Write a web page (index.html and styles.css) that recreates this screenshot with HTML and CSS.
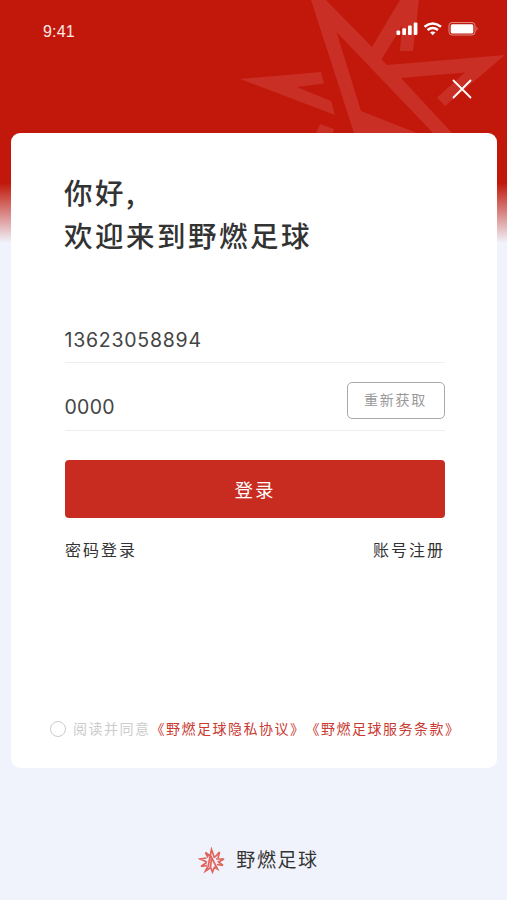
FILE: index.html
```html
<!DOCTYPE html>
<html lang="zh-CN">
<head>
    <meta charset="UTF-8">
    <meta name="viewport" content="width=device-width, initial-scale=1.0">
    <title>野燃足球</title>
    <link rel="stylesheet" href="styles.css">
</head>
<body>
    <svg class="watermark" viewBox="0 0 507 133">
        <path d="M240 79 L321 72 L324 83.5 L297 87 L331 101 L335 115 Z"/>
        <path fill-rule="evenodd" d="M311 0 H326 L372 47 L400 0 H419 L413 51 H400 L402 26 L381.500 59.500 L387 65 L505 55 L445 106 L437 97.500 L465 72.500 L401 78 L452 133 H433 L336.500 32 L361 111 L417 133 H354 Z"/>
        <path d="M320 124 L334 129 L333 133 H316 Z"/>
    </svg>

    <header class="status-bar">
        <span class="time">9:41</span>
        <svg class="status-icons" width="84" height="16" viewBox="0 0 84 16">
            <rect x="1.500" y="8.500" width="3.700" height="4.500" rx="1"/>
            <rect x="7.300" y="6.200" width="3.700" height="6.800" rx="1"/>
            <rect x="13" y="3.500" width="3.700" height="9.500" rx="1"/>
            <rect x="18.700" y="0.500" width="3.700" height="12.500" rx="1"/>
            <g class="wifi">
                <path d="M29.500 4.800 Q37.700 -1.800 46 4.800"/>
                <path d="M32.500 8 Q37.700 4 43 8"/>
            </g>
            <path d="M35 10.300 Q37.700 8.500 40.500 10.300 L37.700 13.200 Z"/>
            <rect class="battery" x="54" y="0.500" width="26" height="12.500" rx="3"/>
            <rect x="55.700" y="2.200" width="22.600" height="9.200" rx="1.500"/>
            <path class="battery-cap" d="M81.500 4.500 Q83.500 6.700 81.500 9 Z"/>
        </svg>
    </header>

    <div class="close-row">
        <svg class="close" width="20" height="20" viewBox="0 0 20 20">
            <path d="M1.500 1.500 L18.500 18.500 M18.500 1.500 L1.500 18.500"/>
        </svg>
    </div>

    <main class="card">
        <h1>你好,<br>欢迎来到野燃足球</h1>

        <form class="login-form">
            <div class="field phone">13623058894</div>
            <div class="field code">
                <span>0000</span>
                <button type="button" class="resend">重新获取</button>
            </div>
            <button type="button" class="submit">登录</button>
        </form>

        <div class="links">
            <span>密码登录</span>
            <span>账号注册</span>
        </div>

        <div class="agreement">
            <span class="radio"></span>
            <span class="agree-text">阅读并同意</span>
            <span class="policy">《野燃足球隐私协议》</span>
            <span class="policy">《野燃足球服务条款》</span>
        </div>
    </main>

    <footer class="brand">
        <svg class="logo" width="28" height="28" viewBox="0 0 28 28">
            <path d="M8.500 11 L2 12 L9 15 M10 10.500 L7.500 5.500 L11.500 8.500 M10 20 L13.500 2.500 L16.500 11 M12.500 8.500 L19.500 22 L16 20 M17 10 L21.500 5 L20 11 M18 12 L26 12 L20.500 15 L25 18.500 L19 17.500 M8.500 15.500 L3 19.500 L9 18.500 M9.500 20 L7.500 24 L12 21 M12 19 L14.500 25 L16.500 20 M12.500 20 L13.500 12"/>
        </svg>
        <span>野燃足球</span>
    </footer>
</body>
</html>
```
FILE: styles.css
```css
* {
    box-sizing: border-box;
}

body {
    position: relative;
    display: flex;
    flex-direction: column;
    height: 900px;
    margin: 0;
    overflow: hidden;
    background: linear-gradient(#c1180b 183px, #f0f3fb 243px);
    color: #333;
    font-family: "Liberation Sans", "Noto Sans CJK SC", sans-serif;
}

.watermark {
    position: absolute;
    top: 0;
    left: 0;
    width: 507px;
    height: 133px;
    fill: #c92f24;
}

.status-bar {
    position: relative;
    display: flex;
    justify-content: space-between;
    height: 60px;
    padding: 22px 28px 0 43px;
    color: #fde9e6;
}

.time {
    font-size: 16px;
    line-height: 20px;
    letter-spacing: 0.2px;
}

.status-icons {
    fill: #fff;
}

.wifi {
    fill: none;
    stroke: #fff;
    stroke-width: 2.5;
}

.battery {
    fill: none;
    stroke: #e08a83;
}

.battery-cap {
    fill: #e08a83;
}

.close-row {
    position: relative;
    display: flex;
    justify-content: flex-end;
    height: 73px;
    padding: 19px 35.5px 0 0;
}

.close {
    stroke: #fff;
    stroke-width: 1.8;
    stroke-linecap: round;
}

.card {
    position: relative;
    display: flex;
    flex-direction: column;
    width: 486px;
    height: 635px;
    margin-left: 11px;
    padding: 37px 53px 0 54px;
    border-radius: 9px;
    background-color: #fff;
}

h1 {
    margin: 0 0 0 -1px;
    font-family: "Noto Sans CJK SC", sans-serif;
    font-size: 28.5px;
    font-weight: 500;
    line-height: 43px;
    letter-spacing: 2.5px;
}

.login-form {
    display: flex;
    flex-direction: column;
    margin: 62px -0.5px 0;
}

.field {
    border-bottom: 1px solid #eee;
    color: #444;
    font-family: Inter, sans-serif;
    font-size: 19.5px;
    letter-spacing: 0.75px;
}

.phone {
    height: 45px;
    line-height: 45px;
}

.code {
    display: flex;
    justify-content: space-between;
    height: 68px;
    padding-top: 19px;
    line-height: 50px;
}

.code span {
    letter-spacing: 0.3px;
}

button {
    padding: 0;
    font-family: "Noto Sans CJK SC", sans-serif;
}

.resend {
    width: 98px;
    height: 37px;
    padding-bottom: 3px;
    border: 1.5px solid #aaa;
    border-radius: 5px;
    background: none;
    color: #999;
    font-size: 14px;
    letter-spacing: 1.7px;
}

.submit {
    height: 58px;
    margin-top: 29px;
    padding-left: 1px;
    border: none;
    border-radius: 4px;
    background-color: #c82c21;
    color: #fff;
    font-size: 18.5px;
    letter-spacing: 2px;
}

.links {
    display: flex;
    justify-content: space-between;
    margin: 21px -1px 0 0;
    font-size: 16px;
    line-height: 24px;
    letter-spacing: 2px;
}

.agreement {
    display: flex;
    align-items: center;
    margin: 155px 0 0 -15px;
    font-size: 14px;
    line-height: 22px;
    letter-spacing: 1.5px;
    white-space: nowrap;
}

.radio {
    flex: none;
    width: 16px;
    height: 16px;
    margin-right: 7px;
    border: 1.5px solid #ccc;
    border-radius: 50%;
}

.agree-text {
    color: #ccc;
}

.policy {
    color: #c83a32;
}

.brand {
    display: flex;
    justify-content: center;
    align-items: center;
    gap: 10px;
    margin-top: 79px;
    padding-left: 10px;
    font-size: 19px;
    line-height: 28px;
    letter-spacing: 1.6px;
}

.logo {
    fill: none;
    stroke: #e0635c;
    stroke-width: 1.7;
}
```
